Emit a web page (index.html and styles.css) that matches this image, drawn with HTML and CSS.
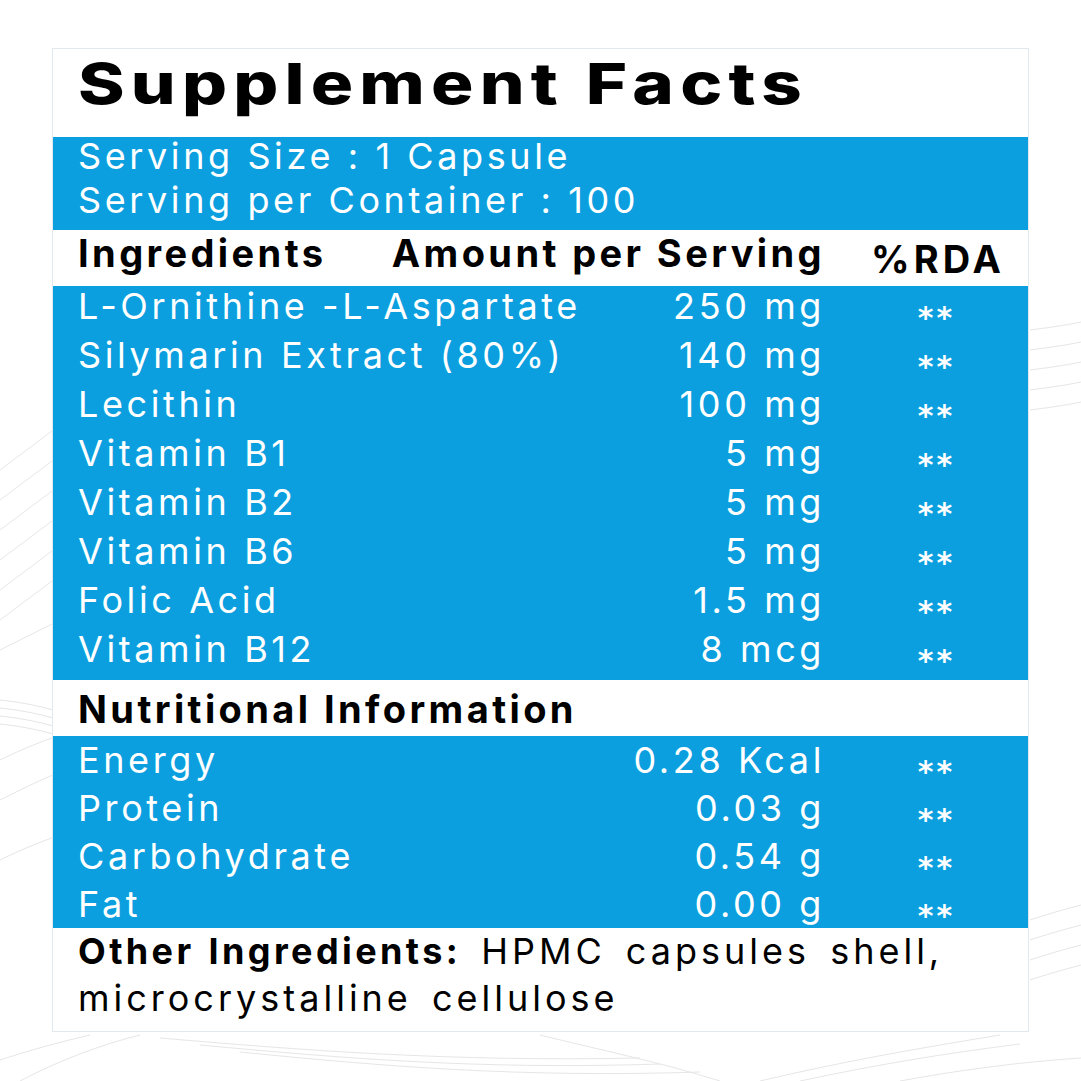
FILE: index.html
```html
<!DOCTYPE html>
<html lang="en">
<head>
<meta charset="utf-8">
<title>Supplement Facts</title>
<link rel="stylesheet" href="styles.css">
</head>
<body>
<svg class="bg-waves" width="1081" height="1081" viewBox="0 0 1081 1081" aria-hidden="true">
  <g fill="none" stroke="#e6e6e6" stroke-width="1">
    <path d="M0 470 C 20 455, 40 440, 60 425"/>
    <path d="M0 500 C 20 485, 40 470, 60 455"/>
    <path d="M0 530 C 20 515, 40 500, 60 485"/>
    <path d="M0 560 C 20 545, 40 530, 60 515"/>
    <path d="M0 590 C 20 575, 40 560, 60 545"/>
    <path d="M0 620 C 20 605, 40 590, 60 575"/>
    <path d="M0 650 C 20 640, 40 630, 60 620"/>
    <path d="M0 700 C 20 702, 40 706, 60 712"/>
    <path d="M0 708 C 20 710, 40 714, 60 720"/>
    <path d="M0 716 C 20 718, 40 722, 60 728"/>
    <path d="M0 724 C 20 726, 40 730, 60 736"/>
    <path d="M0 760 C 20 750, 40 742, 60 735"/>
    <path d="M0 800 C 20 790, 40 780, 60 772"/>
    <path d="M0 860 C 20 850, 40 842, 60 835"/>
    <path d="M0 1060 C 30 1050, 60 1042, 90 1035"/>
    <path d="M20 1081 C 60 1060, 100 1045, 140 1035"/>
    <path d="M160 1038 C 300 1050, 450 1062, 640 1058"/>
    <path d="M200 1045 C 340 1058, 480 1070, 660 1064"/>
    <path d="M240 1052 C 380 1066, 520 1078, 700 1072"/>
    <path d="M540 1035 C 600 1050, 660 1062, 720 1081"/>
    <path d="M760 1081 C 840 1062, 920 1048, 1000 1035"/>
    <path d="M800 1081 C 870 1066, 940 1054, 1020 1044"/>
    <path d="M900 1081 C 960 1070, 1020 1062, 1081 1058"/>
    <path d="M1030 330 C 1045 328, 1062 326, 1081 322"/>
    <path d="M1030 350 C 1045 348, 1062 346, 1081 342"/>
    <path d="M1030 370 C 1045 368, 1062 366, 1081 362"/>
    <path d="M1030 390 C 1045 388, 1062 386, 1081 382"/>
    <path d="M1030 410 C 1045 408, 1062 406, 1081 402"/>
    <path d="M1030 920 C 1045 915, 1062 910, 1081 905"/>
    <path d="M1030 940 C 1045 935, 1062 930, 1081 925"/>
    <path d="M1030 960 C 1045 955, 1062 950, 1081 945"/>
    <path d="M1030 980 C 1045 975, 1062 970, 1081 965"/>
  </g>
</svg>
<main class="panel">
  <div class="title-wrap"><h1 class="title">Supplement Facts</h1></div>
  <section class="band serving">
    <div class="s1">Serving Size : 1 Capsule</div>
    <div class="s2">Serving per Container : 100</div>
  </section>
  <div class="row head">
    <span class="name">Ingredients</span>
    <span class="amt">Amount per Serving</span>
    <span class="rda-head">%RDA</span>
  </div>
  <section class="band list">
    <div class="row"><span class="name">L-Ornithine -L-Aspartate</span><span class="amt">250 mg</span><span class="rda">**</span></div>
    <div class="row"><span class="name">Silymarin Extract (80%)</span><span class="amt">140 mg</span><span class="rda">**</span></div>
    <div class="row"><span class="name">Lecithin</span><span class="amt">100 mg</span><span class="rda">**</span></div>
    <div class="row"><span class="name">Vitamin B1</span><span class="amt">5 mg</span><span class="rda">**</span></div>
    <div class="row"><span class="name">Vitamin B2</span><span class="amt">5 mg</span><span class="rda">**</span></div>
    <div class="row"><span class="name">Vitamin B6</span><span class="amt">5 mg</span><span class="rda">**</span></div>
    <div class="row"><span class="name">Folic Acid</span><span class="amt">1.5 mg</span><span class="rda">**</span></div>
    <div class="row"><span class="name">Vitamin B12</span><span class="amt">8 mcg</span><span class="rda">**</span></div>
  </section>
  <div class="row head nutri">
    <span class="name">Nutritional Information</span>
  </div>
  <section class="band list nlist">
    <div class="row"><span class="name">Energy</span><span class="amt">0.28 Kcal</span><span class="rda">**</span></div>
    <div class="row"><span class="name">Protein</span><span class="amt">0.03 g</span><span class="rda">**</span></div>
    <div class="row"><span class="name">Carbohydrate</span><span class="amt">0.54 g</span><span class="rda">**</span></div>
    <div class="row"><span class="name">Fat</span><span class="amt">0.00 g</span><span class="rda">**</span></div>
  </section>
  <div class="other">
    <div class="other-line"><b class="other-label">Other Ingredients:</b><span class="other-text">HPMC capsules shell,</span></div>
    <div class="other-line"><span class="other-text">microcrystalline cellulose</span></div>
  </div>
</main>
</body>
</html>
```
FILE: styles.css
```css
* { box-sizing: border-box; }
html, body { margin: 0; padding: 0; background: #ffffff; }
body {
  width: 1081px;
  height: 1081px;
  position: relative;
  overflow: hidden;
  font-family: Inter, "Open Sans", sans-serif;
  color: #000;
}
.bg-waves {
  position: absolute;
  left: 0;
  top: 0;
  z-index: 0;
}
.panel {
  position: relative;
  z-index: 1;
  margin: 48px 0 0 52px;
  width: 977px;
  height: 984px;
  background: #fff;
  border: 1px solid #e1e8ee;
  display: flex;
  flex-direction: column;
}
.title-wrap {
  height: 88px;
  padding-left: 25px;
  flex: none;
}
.title {
  display: inline-block;
  margin: 0;
  font-size: 57px;
  font-weight: 800;
  line-height: 70px;
  letter-spacing: 5px;
  white-space: nowrap;
  transform: scaleX(1.24);
  transform-origin: left center;
}
.band {
  background: #0b9fdf;
  color: #fff;
  flex: none;
}
.serving {
  height: 93px;
  padding-left: 25px;
  font-size: 36px;
  letter-spacing: 3.6px;
}
.s1 { line-height: 39px; }
.s2 { line-height: 49px; }
.row {
  display: grid;
  grid-template-columns: minmax(0, 1fr) 262px 186px;
  column-gap: 17px;
  padding-left: 25px;
  align-items: start;
}
.head {
  height: 56px;
  flex: none;
  font-size: 38px;
  font-weight: 700;
  line-height: 46px;
  letter-spacing: 3.4px;
}
.head .amt { justify-self: end; }
.rda-head {
  text-align: center;
  line-height: 58px;
  letter-spacing: 4px;
  padding-left: 6px;
}
.list {
  height: 394px;
}
.list .row {
  height: 49px;
  font-size: 36px;
  line-height: 40px;
  letter-spacing: 3.6px;
}
.name { white-space: nowrap; }
.amt { text-align: right; white-space: nowrap; }
.rda {
  text-align: center;
  font-family: "DejaVu Sans", sans-serif;
  font-size: 30px;
  font-weight: 700;
  line-height: 24px;
  letter-spacing: 3px;
  padding-top: 20px;
  padding-left: 3px;
}
.nutri { line-height: 58px; }
.nlist {
  height: 192px;
}
.nlist .row {
  height: 48px;
  line-height: 48px;
}
.nlist .rda { line-height: 24px; padding-top: 24px; }
.other {
  padding: 0 10px 0 25px;
  font-size: 36px;
  line-height: 47px;
}
.other-line {
  display: flex;
  gap: 20px;
  white-space: nowrap;
}
.other-label {
  font-weight: 700;
  letter-spacing: 3.4px;
  word-spacing: 2px;
}
.other-text {
  letter-spacing: 4px;
  word-spacing: 6px;
}
```
